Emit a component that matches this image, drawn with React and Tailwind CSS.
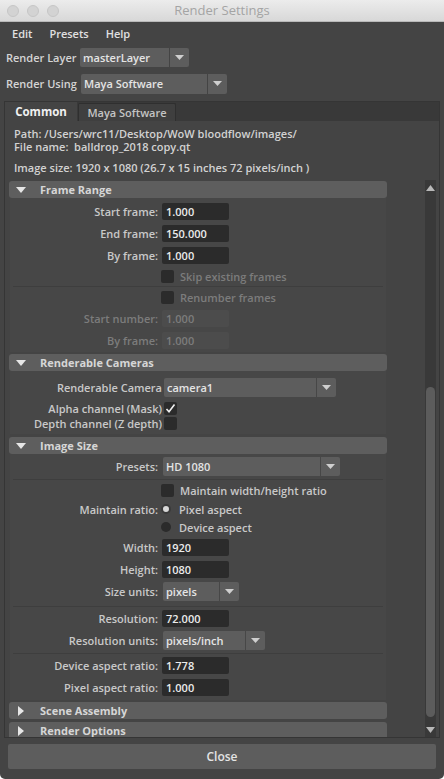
import React from "react";

const font = "font-['Open_Sans',sans-serif]";

function Arrow() {
  return (
    <svg width="9" height="5" viewBox="0 0 9 5">
      <polygon points="0,0 9,0 4.5,5" fill="#cfcfcf" />
    </svg>
  );
}

function Dropdown({ value, mainW, h = "h-[19px]" }) {
  return (
    <div className={`flex ${h} gap-px`}>
      <div className={`${mainW} bg-[#5d5d5d] rounded-l-[2px] pl-[3px] flex items-center text-[#e4e4e4] font-semibold`}>
        {value}
      </div>
      <div className="w-[19px] bg-[#5d5d5d] rounded-r-[2px] flex items-center justify-center">
        <Arrow />
      </div>
    </div>
  );
}

function Field({ value, disabled }) {
  return (
    <div
      className={`w-[67px] h-[17px] rounded-[2px] pl-[4px] flex items-center font-semibold ${
        disabled ? "bg-[#4c4c4c] text-[#7c7c7c]" : "bg-[#2b2b2b] text-[#ececec]"
      }`}
    >
      {value}
    </div>
  );
}

function Row({ label, children, disabled, h = "h-[22px]" }) {
  return (
    <div className={`flex items-center ${h}`}>
      <div className={`w-[148px] text-right font-semibold ${disabled ? "text-[#7c7c7c]" : "text-[#c9c9c9]"}`}>
        {label}
      </div>
      <div className="ml-[4px] flex items-center">{children}</div>
    </div>
  );
}

function Check({ checked }) {
  return (
    <div className="w-[13px] h-[13px] rounded-[2px] bg-[#2b2b2b] flex items-center justify-center">
      {checked && (
        <svg width="11" height="11" viewBox="0 0 11 11">
          <path d="M1.5 6 L4 8.8 L9.5 1.5" stroke="#f0f0f0" strokeWidth="1.6" fill="none" />
        </svg>
      )}
    </div>
  );
}

function CheckRow({ label, disabled, h = "h-[20px]" }) {
  return (
    <div className={`flex items-center ${h} pl-[151px]`}>
      <Check />
      <span className={`ml-[6px] font-semibold ${disabled ? "text-[#7c7c7c]" : "text-[#c9c9c9]"}`}>{label}</span>
    </div>
  );
}

function Radio({ on }) {
  return (
    <div
      className={`w-[10px] h-[10px] rounded-full ${
        on ? "bg-[#d8d8d8] border-[2px] border-[#3a3a3a]" : "bg-[#2b2b2b]"
      }`}
    />
  );
}

function Sep() {
  return <div className="h-px bg-[#3e3e3e] mx-[3px]" />;
}

function Header({ title, open = true, className = "" }) {
  return (
    <div className={`h-[17px] bg-[#5e5e5e] rounded-[3px] flex items-center shrink-0 ${className}`}>
      <div className="w-[31px] pl-[7px] flex items-center">
        {open ? (
          <svg width="10" height="6" viewBox="0 0 10 6">
            <polygon points="0,0 10,0 5,6" fill="#e6e6e6" />
          </svg>
        ) : (
          <svg width="6" height="10" viewBox="0 0 6 10" className="ml-[2px]">
            <polygon points="0,0 6,5 0,10" fill="#e6e6e6" />
          </svg>
        )}
      </div>
      <span className="font-bold text-[#d6d6d6]">{title}</span>
    </div>
  );
}

export default function App() {
  return (
    <div className={`${font} text-[11px] leading-none w-[444px] h-[779px] bg-[#444444] flex flex-col overflow-hidden rounded-b-[5px]`}>
      {/* title bar */}
      <div className="h-[22px] shrink-0 bg-gradient-to-b from-[#ececec] to-[#d8d8d8] border-b border-[#b9b9b9] flex items-center relative">
        <div className="flex gap-[8px] pl-[7px]">
          <div className="w-[12px] h-[12px] rounded-full bg-[#d3d3d3] border border-[#c6c6c6]" />
          <div className="w-[12px] h-[12px] rounded-full bg-[#d3d3d3] border border-[#c6c6c6]" />
          <div className="w-[12px] h-[12px] rounded-full bg-[#d3d3d3] border border-[#c6c6c6]" />
        </div>
        <div className="absolute inset-0 flex items-center justify-center text-[13px] text-[#a4a4a4]">
          Render Settings
        </div>
      </div>

      {/* menu */}
      <div className="h-[23px] shrink-0 flex items-center gap-[17px] pl-[12px] font-semibold text-[#e0e0e0]">
        <span>Edit</span>
        <span>Presets</span>
        <span>Help</span>
      </div>

      <div className="h-[24px] shrink-0 flex items-center pl-[6px]">
        <span className="w-[74px] font-semibold text-[#d4d4d4]">Render Layer</span>
        <Dropdown value="masterLayer" mainW="w-[89px]" />
      </div>
      <div className="h-[28px] shrink-0 flex items-center pl-[6px] pt-px">
        <span className="w-[75px] font-semibold text-[#d4d4d4]">Render Using</span>
        <Dropdown value="Maya Software" mainW="w-[126px]" h="h-[20px]" />
      </div>

      {/* tabbed panel */}
      <div className="mx-[4px] mt-[4px] h-[637px] shrink-0 flex flex-col border border-[#353535]">
        <div className="h-[19px] bg-[#393939] flex items-end shrink-0">
          <div className="w-[72px] h-[19px] bg-[#444444] flex items-center justify-center font-bold text-[#f0f0f0] text-[11.5px]">
            Common
          </div>
          <div className="w-[98px] ml-px h-[18px] bg-[#3f3f3f] border border-b-0 border-[#2f2f2f] rounded-t-[2px] flex items-center justify-center font-semibold text-[#c4c4c4]">
            Maya Software
          </div>
        </div>

        <div className="pl-[9px] pt-[6px] font-semibold text-[#d2d2d2] shrink-0">
          <div className="h-[13px] pt-[1px]">Path: /Users/wrc11/Desktop/WoW bloodflow/images/</div>
          <div className="h-[13px] pt-[1px]">File name:&nbsp; balldrop_2018 copy.qt</div>
          <div className="h-[12px] mt-[9px]">Image size: 1920 x 1080 (26.7 x 15 inches 72 pixels/inch )</div>
        </div>

        <div className="flex flex-1 min-h-0 mt-[6px] overflow-hidden">
          <div className="w-[378px] ml-[4px] flex flex-col">
            <Header title="Frame Range" className="mt-px" />
            <div className="bg-[#474747] mx-px pt-[2px] pb-[1px]">
              <Row label="Start frame:"><Field value="1.000" /></Row>
              <Row label="End frame:"><Field value="150.000" /></Row>
              <Row label="By frame:"><Field value="1.000" /></Row>
              <CheckRow label="Skip existing frames" disabled />
              <Sep />
              <CheckRow label="Renumber frames" disabled />
              <Row label="Start number:" disabled><Field value="1.000" disabled /></Row>
              <Row label="By frame:" disabled><Field value="1.000" disabled /></Row>
            </div>

            <Header title="Renderable Cameras" className="mt-[2px]" />
            <div className="bg-[#474747] mx-px pt-[5px] pb-[3px]">
              <div className="flex items-center h-[22px]">
                <div className="w-[152px] text-right font-semibold text-[#c9c9c9]">Renderable Camera</div>
                <div className="ml-[2px]"><Dropdown value="camera1" mainW="w-[152px]" /></div>
              </div>
              <div className="flex items-center h-[15px] mt-[3px]">
                <div className="w-[152px] text-right font-semibold text-[#c9c9c9]">Alpha channel (Mask)</div>
                <div className="ml-[2px]"><Check checked /></div>
              </div>
              <div className="flex items-center h-[15px]">
                <div className="w-[152px] text-right font-semibold text-[#c9c9c9]">Depth channel (Z depth)</div>
                <div className="ml-[2px]"><Check /></div>
              </div>
            </div>

            <Header title="Image Size" className="mt-[3px]" />
            <div className="bg-[#474747] mx-px pt-px pb-[2px]">
              <div className="flex items-center h-[22px]">
                <div className="w-[148px] text-right font-semibold text-[#c9c9c9]">Presets:</div>
                <div className="ml-[5px]"><Dropdown value="HD 1080" mainW="w-[157px]" /></div>
              </div>
              <div className="mt-[2px]"><Sep /></div>
              <CheckRow label="Maintain width/height ratio" />
              <div className="flex items-center h-[18px]">
                <div className="w-[148px] text-right font-semibold text-[#c9c9c9]">Maintain ratio:</div>
                <div className="ml-[3px] flex items-center gap-[8px]">
                  <Radio on />
                  <span className="font-semibold text-[#c9c9c9]">Pixel aspect</span>
                </div>
              </div>
              <div className="flex items-center h-[18px]">
                <div className="w-[148px]" />
                <div className="ml-[3px] flex items-center gap-[8px]">
                  <Radio />
                  <span className="font-semibold text-[#c9c9c9]">Device aspect</span>
                </div>
              </div>
              <Row label="Width:"><Field value="1920" /></Row>
              <Row label="Height:"><Field value="1080" /></Row>
              <div className="flex items-center h-[22px]">
                <div className="w-[148px] text-right font-semibold text-[#c9c9c9]">Size units:</div>
                <div className="ml-[5px]"><Dropdown value="pixels" mainW="w-[56px]" /></div>
              </div>
              <div className="mt-[4px]"><Sep /></div>
              <Row label="Resolution:"><Field value="72.000" /></Row>
              <div className="flex items-center h-[22px]">
                <div className="w-[148px] text-right font-semibold text-[#c9c9c9]">Resolution units:</div>
                <div className="ml-[5px]"><Dropdown value="pixels/inch" mainW="w-[82px]" /></div>
              </div>
              <div className="mt-[2px]"><Sep /></div>
              <Row label="Device aspect ratio:"><Field value="1.778" /></Row>
              <Row label="Pixel aspect ratio:"><Field value="1.000" /></Row>
            </div>

            <Header title="Scene Assembly" open={false} className="mt-[2px]" />
            <Header title="Render Options" open={false} className="mt-[3px]" />
          </div>

          {/* scrollbar */}
          <div className="ml-auto mr-[3px] w-[11px] bg-[#393939] flex flex-col items-center">
            <svg width="9" height="6" viewBox="0 0 9 6" className="mt-[5px]">
              <polygon points="4.5,0 9,6 0,6" fill="#b8b8b8" />
            </svg>
            <div className="mt-[196px] w-[9px] h-[330px] rounded-full bg-[#5c5c5c]" />
            <svg width="9" height="6" viewBox="0 0 9 6" className="mt-[10px]">
              <polygon points="0,0 9,0 4.5,6" fill="#b8b8b8" />
            </svg>
          </div>
        </div>
      </div>

      <div className="mx-[8px] mt-[6px] h-[25px] shrink-0 bg-[#5d5d5d] rounded-[2px] flex items-center justify-center font-semibold text-[12px] text-[#e4e4e4]">
        Close
      </div>
    </div>
  );
}
